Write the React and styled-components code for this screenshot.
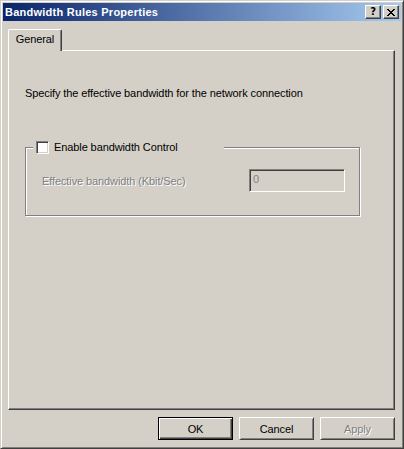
import React from "react";
import styled, { createGlobalStyle } from "styled-components";

const face = "#D4D0C8";
const shadow = "#808080";
const darkShadow = "#404040";

const GlobalStyle = createGlobalStyle`
  html, body {
    margin: 0;
    padding: 0;
    background: ${face};
  }
  body {
    font-family: "Liberation Sans", Arial, sans-serif;
    font-size: 11px;
    letter-spacing: -0.1px;
    color: #000;
  }
`;

const Window = styled.div`
  box-sizing: border-box;
  width: 404px;
  height: 449px;
  background: ${face};
  padding: 1px;
  border: 1px solid;
  border-color: ${face} ${darkShadow} ${darkShadow} ${face};
  box-shadow: inset 1px 1px #fff, inset -1px -1px ${shadow};
  display: flex;
  flex-direction: column;
`;

const Frame = styled.div`
  flex: 1;
  padding: 1px;
  display: flex;
  flex-direction: column;
`;

const TitleBar = styled.div`
  height: 18px;
  display: flex;
  align-items: center;
  padding: 0 2px 0 2px;
  background: linear-gradient(to right, #0a246a, #a6caf0);
`;

const Title = styled.div`
  flex: 1;
  color: #fff;
  font-weight: bold;
  font-size: 11px;
  letter-spacing: 0.25px;
  white-space: nowrap;
`;

const CaptionButton = styled.div`
  box-sizing: border-box;
  width: 16px;
  height: 14px;
  margin-left: ${(p) => (p.$gap ? "2px" : "0")};
  background: ${face};
  border: 1px solid;
  border-color: #fff ${darkShadow} ${darkShadow} #fff;
  box-shadow: inset -1px -1px ${shadow};
  display: flex;
  align-items: center;
  justify-content: center;
  font-family: "DejaVu Sans", sans-serif;
  font-weight: bold;
  font-size: 10px;
  line-height: 1;
`;

const Body = styled.div`
  flex: 1;
  display: flex;
  flex-direction: column;
  padding: 8px 6px 6px 5px;
`;

const TabStrip = styled.div`
  display: flex;
  height: 21px;
  position: relative;
  z-index: 1;
`;

const Tab = styled.div`
  box-sizing: border-box;
  width: 54px;
  height: 22px;
  background: ${face};
  border-top: 1px solid #fff;
  border-left: 1px solid #fff;
  border-right: 1px solid ${darkShadow};
  border-radius: 2px 2px 0 0;
  box-shadow: inset -1px 0 ${shadow};
  display: flex;
  align-items: flex-start;
  justify-content: center;
  padding-top: 3px;
`;

const Sheet = styled.div`
  box-sizing: border-box;
  height: 360px;
  border: 1px solid;
  border-color: #fff ${darkShadow} ${darkShadow} #fff;
  box-shadow: inset -1px -1px ${shadow};
  padding: 36px 0 0 16px;
`;

const Intro = styled.div`
  line-height: 13px;
  margin: 0 0 47px;
`;

const GroupBox = styled.div`
  position: relative;
  box-sizing: border-box;
  width: 335px;
  height: 69px;
  border: 1px solid ${shadow};
  box-shadow: inset 1px 1px #fff, 1px 1px #fff;
  padding: 21px 14px 0 16px;
  display: flex;
  align-items: center;
  justify-content: space-between;
  align-content: flex-start;
  flex-wrap: wrap;
`;

const Legend = styled.label`
  position: absolute;
  left: 7px;
  top: -7px;
  width: 191px;
  height: 13px;
  background: ${face};
  display: flex;
  align-items: center;
  padding-left: 3px;
  box-sizing: border-box;
  line-height: 13px;
`;

const CheckBox = styled.span`
  box-sizing: border-box;
  width: 13px;
  height: 13px;
  background: #fff;
  border: 1px solid;
  border-color: ${shadow} #fff #fff ${shadow};
  box-shadow: inset 1px 1px ${darkShadow}, inset -1px -1px ${face};
  margin-right: 5px;
  flex-shrink: 0;
`;

const DisabledText = styled.span`
  color: ${shadow};
  text-shadow: 1px 1px #fff;
`;

const Edit = styled.div`
  box-sizing: border-box;
  width: 96px;
  height: 23px;
  background: ${face};
  border: 1px solid;
  border-color: ${shadow} #fff #fff ${shadow};
  box-shadow: inset 1px 1px ${darkShadow}, inset -1px -1px ${face};
  color: ${shadow};
  padding: 3px 0 0 3px;
  line-height: 13px;
`;

const ButtonRow = styled.div`
  display: flex;
  justify-content: flex-end;
  gap: 6px;
  margin-top: 7px;
`;

const Button = styled.div`
  box-sizing: border-box;
  width: 75px;
  height: 23px;
  background: ${face};
  border: 1px solid;
  border-color: ${(p) => (p.$default ? "#000" : `#fff ${darkShadow} ${darkShadow} #fff`)};
  box-shadow: ${(p) =>
    p.$default
      ? `inset 1px 1px #fff, inset -1px -1px ${darkShadow}, inset -2px -2px ${shadow}`
      : `inset 1px 1px ${face}, inset -1px -1px ${shadow}`};
  display: flex;
  align-items: center;
  justify-content: center;
  color: ${(p) => (p.$disabled ? shadow : "#000")};
  text-shadow: ${(p) => (p.$disabled ? "1px 1px #fff" : "none")};
`;

function CloseGlyph() {
  return (
    <svg width="8" height="7" viewBox="0 0 8 7" shapeRendering="crispEdges">
      <path d="M0 0h2v1H0zM6 0h2v1H6zM1 1h2v1H1zM5 1h2v1H5zM2 2h4v1H2zM3 3h2v1H3zM2 4h4v1H2zM1 5h2v1H1zM5 5h2v1H5zM0 6h2v1H0zM6 6h2v1H6z" fill="#000" />
    </svg>
  );
}

export default function App() {
  return (
    <>
      <GlobalStyle />
      <Window>
        <Frame>
          <TitleBar>
            <Title>Bandwidth Rules Properties</Title>
            <CaptionButton>?</CaptionButton>
            <CaptionButton $gap>
              <CloseGlyph />
            </CaptionButton>
          </TitleBar>
          <Body>
            <TabStrip>
              <Tab>General</Tab>
            </TabStrip>
            <Sheet>
              <Intro>Specify the effective bandwidth for the network connection</Intro>
              <GroupBox>
                <Legend>
                  <CheckBox />
                  Enable bandwidth Control
                </Legend>
                <DisabledText>Effective bandwidth (Kbit/Sec)</DisabledText>
                <Edit>0</Edit>
              </GroupBox>
            </Sheet>
            <ButtonRow>
              <Button $default>OK</Button>
              <Button>Cancel</Button>
              <Button $disabled>Apply</Button>
            </ButtonRow>
          </Body>
        </Frame>
      </Window>
    </>
  );
}
